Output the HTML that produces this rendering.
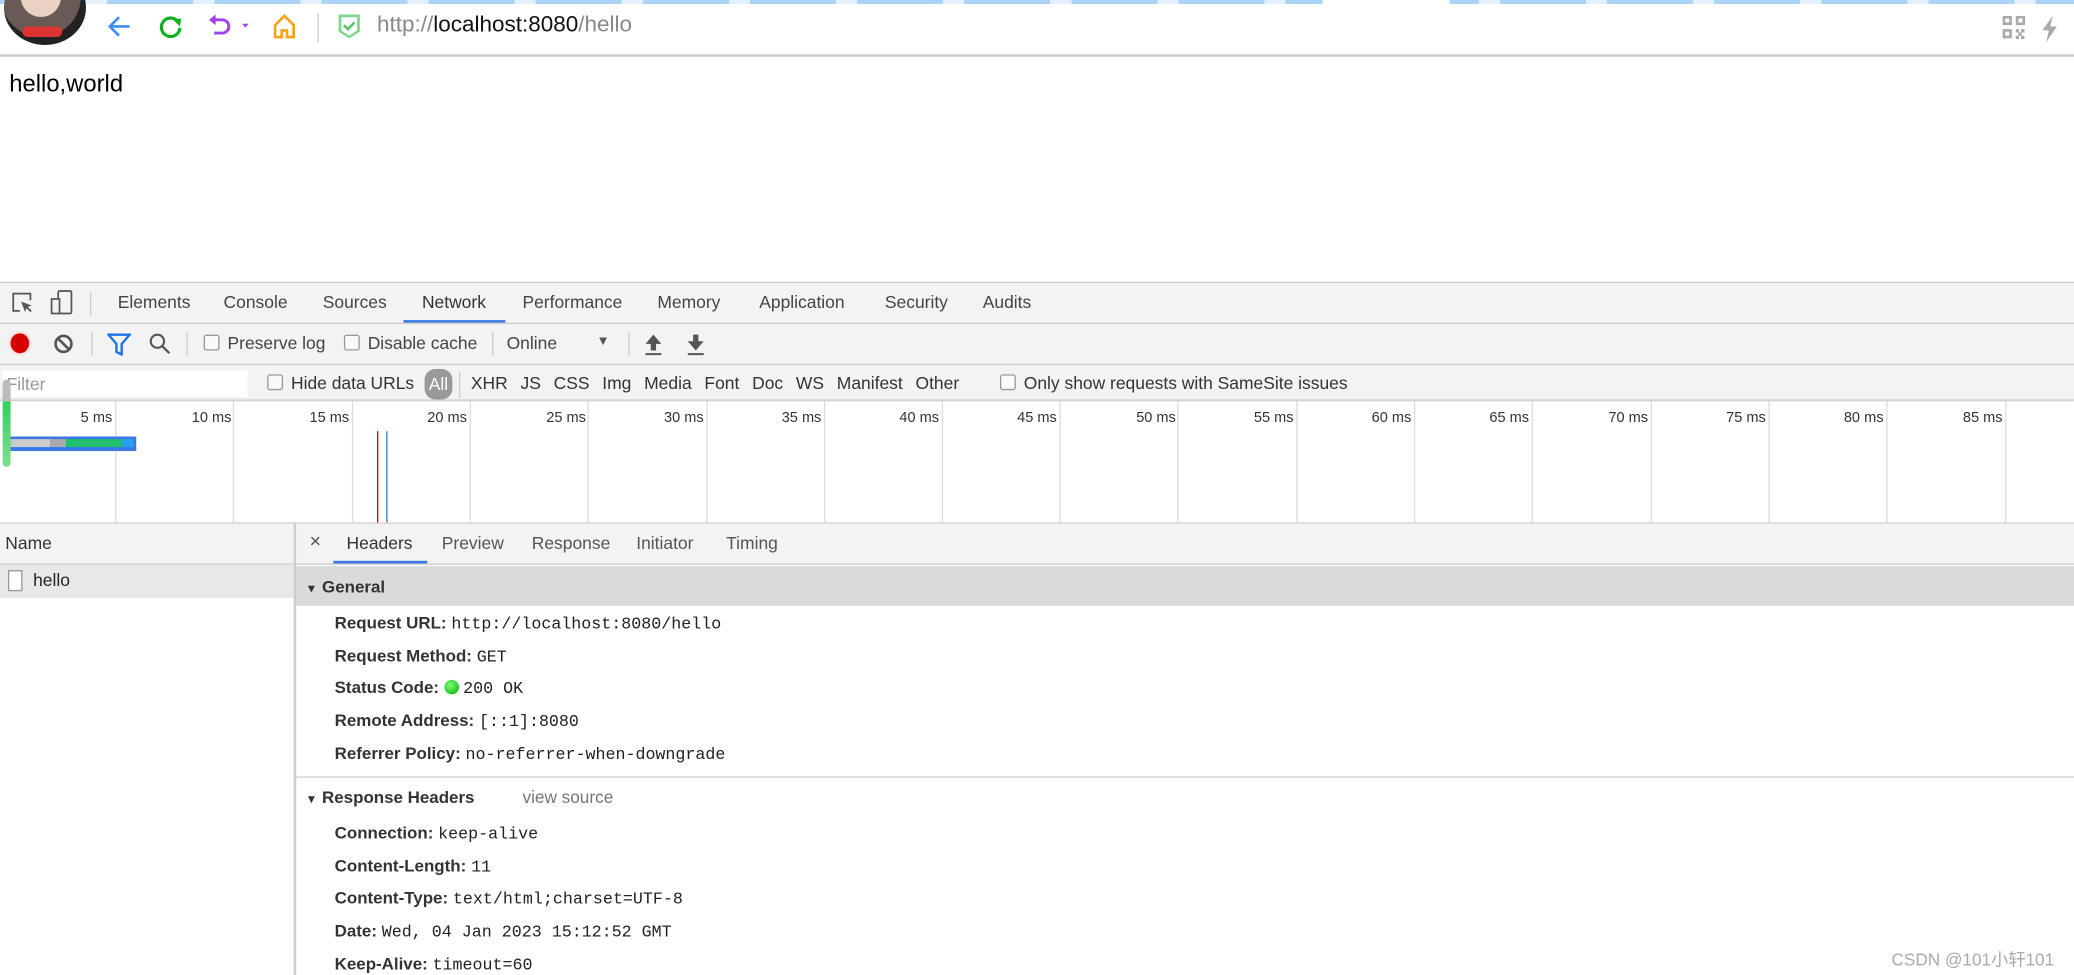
<!DOCTYPE html>
<html><head><meta charset="utf-8"><style>
html,body{margin:0;padding:0;width:2074px;height:975px;overflow:hidden;background:#fff}
#w{position:absolute;left:0;top:0;width:1568px;height:737px;transform:scale(1.32270);transform-origin:0 0;font-family:"Liberation Sans","Noto Sans CJK SC",sans-serif;font-size:13px;color:#333}
.a{position:absolute;white-space:nowrap}
.mono{font-family:"Liberation Mono",monospace;font-size:12.6px;color:#222}
.k{font-weight:bold;color:#333;font-size:12.8px}
.cb{display:inline-block;width:10px;height:10px;border:1px solid #999;border-radius:2px;background:#fafafa;vertical-align:-1px;margin-right:6px}
.vl{position:absolute;width:1px;background:#ddd}
</style></head><body><div id="w">
<div class="a" style="left:0;top:0;width:1568px;height:3px;background:repeating-linear-gradient(90deg,#a9d3fb 0 65px,#e3f0fd 65px 81px)"></div>
<div class="a" style="left:1000px;top:0;width:96px;height:3px;background:#fff"></div>
<div class="a" style="left:3px;top:-22px;width:62px;height:56px;border-radius:50%;background:radial-gradient(circle at 45% 35%,#e9d2c4 0 30%,#6a5a55 31% 60%,#222 61%);overflow:hidden"><div style="position:absolute;left:14px;top:42px;width:30px;height:8px;background:#d33;border-radius:4px"></div></div>
<svg class="a" style="left:80px;top:9px" width="22" height="22" viewBox="0 0 22 22"><path d="M18 11H4M10 4L3 11l7 7" fill="none" stroke="#3a8ef6" stroke-width="2"/></svg>
<svg class="a" style="left:118px;top:9px" width="22" height="22" viewBox="0 0 22 22"><path d="M17 8A7 7 0 1 0 18 12" fill="none" stroke="#10b020" stroke-width="2.4"/><path d="M13 6l6-1-1 6z" fill="#10b020"/></svg>
<svg class="a" style="left:156px;top:9px" width="36" height="22" viewBox="0 0 36 22"><path d="M5 6h7a5 5 0 0 1 0 10H6" fill="none" stroke="#a040f0" stroke-width="2.2"/><path d="M2 6l5-4v8z" fill="#a040f0"/><path d="M27 9h5l-2.5 3z" fill="#a040f0"/></svg>
<svg class="a" style="left:204px;top:9px" width="22" height="22" viewBox="0 0 22 22"><path d="M4 10L11 3l7 7v9h-5v-5h-4v5H4z" fill="none" stroke="#f9a01a" stroke-width="2"/></svg>
<div class="a" style="left:240px;top:10px;width:1px;height:22px;background:#ccc"></div>
<svg class="a" style="left:254px;top:9px" width="20" height="22" viewBox="0 0 20 22"><path d="M2 2h16v13l-8 5-8-5z" fill="#7ad68a"/><path d="M4 4h12v10l-6 4-6-4z" fill="#fff"/><path d="M6 10l3 3 5-5" fill="none" stroke="#5cc46e" stroke-width="2"/></svg>
<div class="a" style="left:285px;top:9px;font-size:17px;color:#888">http://<span style="color:#111">localhost:8080</span>/hello</div>
<svg class="a" style="left:1514px;top:12px" width="18" height="18" viewBox="0 0 18 18" fill="#aaa"><rect x="0" y="0" width="7" height="7"/><rect x="10" y="0" width="7" height="7"/><rect x="0" y="10" width="7" height="7"/><rect x="2" y="2" width="3" height="3" fill="#fff"/><rect x="12" y="2" width="3" height="3" fill="#fff"/><rect x="2" y="12" width="3" height="3" fill="#fff"/><rect x="10" y="10" width="2.5" height="2.5"/><rect x="14" y="10" width="2.5" height="2.5"/><rect x="12" y="12.5" width="2.5" height="2.5"/><rect x="10" y="15" width="2.5" height="2.5"/><rect x="14" y="15" width="2.5" height="2.5"/></svg>
<svg class="a" style="left:1542px;top:11px" width="16" height="22" viewBox="0 0 16 22"><path d="M10 1L2 12h5l-2 9 8-12H8z" fill="#aaa"/></svg>
<div class="a" style="left:0;top:41px;width:1568px;height:2px;background:#ccc"></div>
<div class="a" style="left:7px;top:53px;font-size:18px;color:#000">hello,world</div>

<div class="a" style="left:0;top:213px;width:1568px;height:90px;background:#f3f3f3;border-top:1px solid #ccc"></div>
<svg class="a" style="left:8px;top:220px" width="18" height="18" viewBox="0 0 18 18"><path d="M7 15H2V2h13v5" fill="none" stroke="#555" stroke-width="1.3"/><path d="M8 8l8 3-3 1 3 3-1 1-3-3-1 3z" fill="#555"/></svg>
<svg class="a" style="left:37px;top:219px" width="20" height="20" viewBox="0 0 20 20"><rect x="7" y="1" width="10" height="17" rx="1" fill="none" stroke="#555" stroke-width="1.3"/><rect x="2" y="7" width="6" height="11" fill="#f3f3f3" stroke="#555" stroke-width="1.3"/></svg>
<div class="a" style="left:68px;top:221px;width:1px;height:18px;background:#ccc"></div>
<div class="a" style="left:89px;top:221px;font-size:13.2px;color:#444">Elements</div>
<div class="a" style="left:169px;top:221px;font-size:13.2px;color:#444">Console</div>
<div class="a" style="left:244px;top:221px;font-size:13.2px;color:#444">Sources</div>
<div class="a" style="left:319px;top:221px;font-size:13.2px;color:#333">Network</div>
<div class="a" style="left:395px;top:221px;font-size:13.2px;color:#444">Performance</div>
<div class="a" style="left:497px;top:221px;font-size:13.2px;color:#444">Memory</div>
<div class="a" style="left:574px;top:221px;font-size:13.2px;color:#444">Application</div>
<div class="a" style="left:669px;top:221px;font-size:13.2px;color:#444">Security</div>
<div class="a" style="left:743px;top:221px;font-size:13.2px;color:#444">Audits</div>
<div class="a" style="left:305px;top:242px;width:77px;height:2px;background:#3b78e7"></div>
<div class="a" style="left:0;top:244px;width:1568px;height:1px;background:#ccc"></div>
<div class="a" style="left:8px;top:252px;width:14px;height:15px;border-radius:50%;background:#d50000;box-shadow:0 0 3px #f99"></div>
<svg class="a" style="left:40px;top:252px" width="16" height="16" viewBox="0 0 16 16"><circle cx="8" cy="8" r="6" fill="none" stroke="#555" stroke-width="2"/><path d="M4 4l8 8" stroke="#555" stroke-width="2"/></svg>
<div class="a" style="left:69px;top:251px;width:1px;height:18px;background:#ccc"></div>
<svg class="a" style="left:81px;top:252px" width="18" height="17" viewBox="0 0 18 17"><path d="M1 1h16l-6 7v8l-4-2V8z" fill="none" stroke="#1a73e8" stroke-width="1.8"/></svg>
<svg class="a" style="left:112px;top:251px" width="18" height="18" viewBox="0 0 18 18"><circle cx="7" cy="7" r="5" fill="none" stroke="#555" stroke-width="1.6"/><path d="M11 11l5 5" stroke="#555" stroke-width="1.8"/></svg>
<div class="a" style="left:141px;top:251px;width:1px;height:18px;background:#ccc"></div>
<div class="a" style="left:154px;top:252px;font-size:13.2px;color:#444"><span class="cb"></span>Preserve log</div>
<div class="a" style="left:260px;top:252px;font-size:13.2px;color:#444"><span class="cb"></span>Disable cache</div>
<div class="a" style="left:372px;top:251px;width:1px;height:18px;background:#ccc"></div>
<div class="a" style="left:383px;top:252px;font-size:13.2px;color:#444">Online</div>
<div class="a" style="left:451px;top:253px;font-size:10px;color:#555">▼</div>
<div class="a" style="left:475px;top:251px;width:1px;height:18px;background:#ccc"></div>
<svg class="a" style="left:486px;top:251px" width="16" height="18" viewBox="0 0 16 18"><path d="M8 2l6 7H10v5H6V9H2z M2 16h12v1.5H2z" fill="#555"/></svg>
<svg class="a" style="left:518px;top:251px" width="16" height="18" viewBox="0 0 16 18"><path d="M8 14l6-7H10V2H6v5H2z M2 16h12v1.5H2z" fill="#555"/></svg>
<div class="a" style="left:0;top:275px;width:1568px;height:1px;background:#ccc"></div>
<div class="a" style="left:2px;top:280px;width:185px;height:20px;background:#fff"></div>
<div class="a" style="left:5px;top:283px;font-size:13.2px;color:#999">Filter</div>
<div class="a" style="left:202px;top:282px;font-size:13.2px;color:#333"><span class="cb"></span>Hide data URLs</div>
<div class="a" style="left:321px;top:279px;width:21px;height:23px;border-radius:8px;background:#999;color:#fff;font-size:13px;text-align:center;line-height:23px">All</div>
<div class="a" style="left:347px;top:281px;width:1px;height:20px;background:#ccc"></div>
<div class="a" style="left:356px;top:282px;font-size:13.2px;color:#333;word-spacing:6px">XHR JS CSS Img Media Font Doc WS Manifest Other</div>
<div class="a" style="left:756px;top:282px;font-size:13.2px;color:#333"><span class="cb"></span>Only show requests with SameSite issues</div>
<div class="a" style="left:0;top:302px;width:1568px;height:1px;background:#ccc"></div>

<div class="vl" style="left:87px;top:303px;height:92px"></div><div class="vl" style="left:176px;top:303px;height:92px"></div><div class="vl" style="left:266px;top:303px;height:92px"></div><div class="vl" style="left:355px;top:303px;height:92px"></div><div class="vl" style="left:444px;top:303px;height:92px"></div><div class="vl" style="left:534px;top:303px;height:92px"></div><div class="vl" style="left:623px;top:303px;height:92px"></div><div class="vl" style="left:712px;top:303px;height:92px"></div><div class="vl" style="left:801px;top:303px;height:92px"></div><div class="vl" style="left:890px;top:303px;height:92px"></div><div class="vl" style="left:980px;top:303px;height:92px"></div><div class="vl" style="left:1069px;top:303px;height:92px"></div><div class="vl" style="left:1158px;top:303px;height:92px"></div><div class="vl" style="left:1248px;top:303px;height:92px"></div><div class="vl" style="left:1337px;top:303px;height:92px"></div><div class="vl" style="left:1426px;top:303px;height:92px"></div><div class="vl" style="left:1516px;top:303px;height:92px"></div>
<div style="position:absolute;top:310px;left:0;font-size:11px;color:#333">
<span class="a" style="left:61px">5 ms</span><span class="a" style="left:145px">10 ms</span><span class="a" style="left:234px">15 ms</span><span class="a" style="left:323px">20 ms</span><span class="a" style="left:413px">25 ms</span><span class="a" style="left:502px">30 ms</span><span class="a" style="left:591px">35 ms</span><span class="a" style="left:680px">40 ms</span><span class="a" style="left:769px">45 ms</span><span class="a" style="left:859px">50 ms</span><span class="a" style="left:948px">55 ms</span><span class="a" style="left:1037px">60 ms</span><span class="a" style="left:1126px">65 ms</span><span class="a" style="left:1216px">70 ms</span><span class="a" style="left:1305px">75 ms</span><span class="a" style="left:1394px">80 ms</span><span class="a" style="left:1484px">85 ms</span></div>
<div class="a" style="left:3px;top:330px;width:100px;height:11px;background:#3b78e7"></div>
<div class="a" style="left:8px;top:332px;width:30px;height:6px;background:#ccc"></div>
<div class="a" style="left:38px;top:332px;width:12px;height:6px;background:#aaa"></div>
<div class="a" style="left:50px;top:332px;width:42px;height:6px;background:#1fbf6b"></div>
<div class="a" style="left:92px;top:332px;width:9px;height:6px;background:#2aa0f0"></div>
<div class="a" style="left:2px;top:287px;width:6px;height:66px;border-radius:3px;background:linear-gradient(#bbb 0 25%,#2fd060 25%,#7fe090)"></div>
<div class="a" style="left:285px;top:326px;width:1px;height:69px;background:#c00"></div>
<div class="a" style="left:292px;top:326px;width:1px;height:69px;background:#3b78e7"></div>
<div class="a" style="left:0;top:395px;width:1568px;height:1px;background:#ccc"></div>

<div class="a" style="left:0;top:396px;width:222px;height:30px;background:#f3f3f3;border-bottom:1px solid #ccc"></div>
<div class="a" style="left:4px;top:403px;font-size:13.2px;color:#333">Name</div>
<div class="a" style="left:0;top:427px;width:222px;height:25px;background:#e8e8e8"></div>
<div class="a" style="left:6px;top:431px;width:11px;height:16px;border:1px solid #999;background:#fff;box-sizing:border-box"></div>
<div class="a" style="left:25px;top:431px;font-size:13.2px;color:#222">hello</div>
<div class="a" style="left:222px;top:396px;width:2px;height:341px;background:#ccc"></div>

<div class="a" style="left:224px;top:396px;width:1344px;height:30px;background:#f3f3f3;border-bottom:1px solid #ccc"></div>
<div class="a" style="left:234px;top:401px;font-size:15px;color:#555">×</div>
<div class="a" style="left:262px;top:403px;font-size:13.2px;color:#333">Headers</div>
<div class="a" style="left:334px;top:403px;font-size:13.2px;color:#555">Preview</div>
<div class="a" style="left:402px;top:403px;font-size:13.2px;color:#555">Response</div>
<div class="a" style="left:481px;top:403px;font-size:13.2px;color:#555">Initiator</div>
<div class="a" style="left:549px;top:403px;font-size:13.2px;color:#555">Timing</div>
<div class="a" style="left:252px;top:424px;width:71px;height:2px;background:#3b78e7"></div>
<div class="a" style="left:224px;top:428px;width:1344px;height:30px;background:#dadada"></div>
<div class="a k" style="left:231px;top:436px"><span style="font-size:9px">▼</span> General</div>
<div class="a" style="left:253px;top:463px"><span class="k">Request URL:</span> <span class="mono">http://localhost:8080/hello</span></div>
<div class="a" style="left:253px;top:488px"><span class="k">Request Method:</span> <span class="mono">GET</span></div>
<div class="a" style="left:253px;top:512px"><span class="k">Status Code:</span> <span style="display:inline-block;width:11px;height:11px;border-radius:50%;background:radial-gradient(circle at 40% 35%,#7f7,#0a0);vertical-align:-1px"></span> <span class="mono">200 OK</span></div>
<div class="a" style="left:253px;top:537px"><span class="k">Remote Address:</span> <span class="mono">[::1]:8080</span></div>
<div class="a" style="left:253px;top:562px"><span class="k">Referrer Policy:</span> <span class="mono">no-referrer-when-downgrade</span></div>
<div class="a" style="left:224px;top:587px;width:1344px;height:1px;background:#ccc"></div>
<div class="a k" style="left:231px;top:595px"><span style="font-size:9px">▼</span> Response Headers</div>
<div class="a" style="left:395px;top:595px;font-size:13px;color:#777">view source</div>
<div class="a" style="left:253px;top:622px"><span class="k">Connection:</span> <span class="mono">keep-alive</span></div>
<div class="a" style="left:253px;top:647px"><span class="k">Content-Length:</span> <span class="mono">11</span></div>
<div class="a" style="left:253px;top:671px"><span class="k">Content-Type:</span> <span class="mono">text/html;charset=UTF-8</span></div>
<div class="a" style="left:253px;top:696px"><span class="k">Date:</span> <span class="mono">Wed, 04 Jan 2023 15:12:52 GMT</span></div>
<div class="a" style="left:253px;top:721px"><span class="k">Keep-Alive:</span> <span class="mono">timeout=60</span></div>
<div class="a" style="left:1430px;top:715px;font-size:13px;color:#aaa">CSDN @101小轩101</div>
</div></body></html>
